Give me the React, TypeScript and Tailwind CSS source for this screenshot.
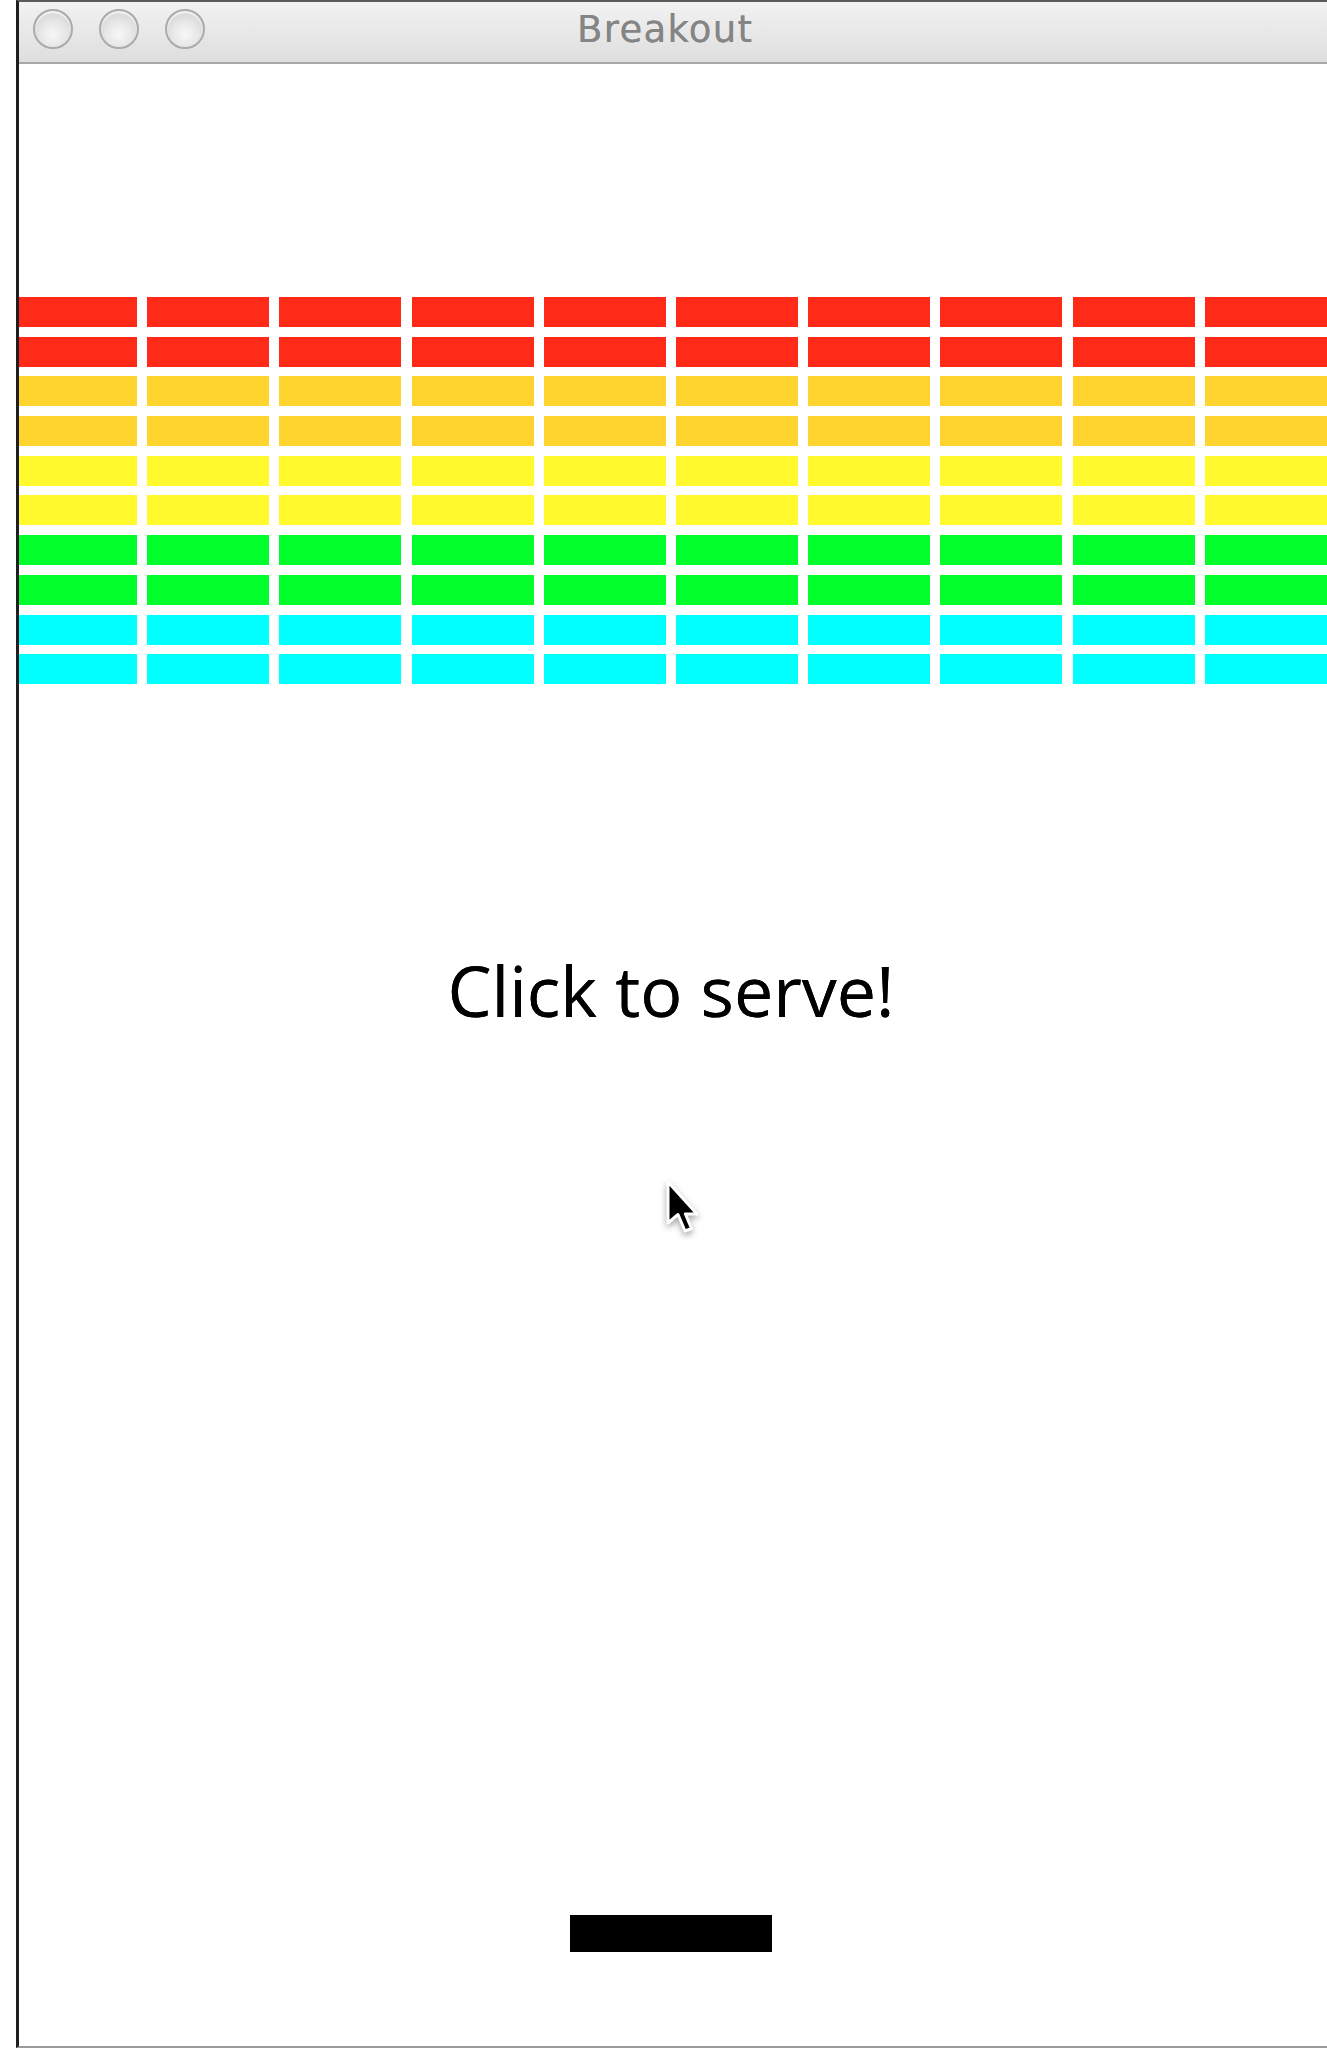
const rows = [
  "bg-[#ff2a17]",
  "bg-[#ff2a17]",
  "bg-[#ffd42e]",
  "bg-[#ffd42e]",
  "bg-[#fff92e]",
  "bg-[#fff92e]",
  "bg-[#00ff2b]",
  "bg-[#00ff2b]",
  "bg-[#00ffff]",
  "bg-[#00ffff]",
];

const COLS = 10;

export default function App() {
  return (
    <div className="relative w-[1327px] h-[2048px] bg-white flex overflow-hidden">
      {/* desktop gutter */}
      <div className="w-[16px] shrink-0 bg-white" />

      {/* window */}
      <div className="flex-1 flex flex-col border-l-[3px] border-l-[#1e1e1e] border-t-2 border-t-[#5a5a5a] border-b-2 border-b-[#9a9a9a] overflow-hidden">
        {/* title bar */}
        <div className="h-[62px] shrink-0 flex items-start pt-[7px] pl-[14px] bg-gradient-to-b from-[#f2f2f2] to-[#dedede] border-b-2 border-b-[#a8a8a8]">
          <div className="flex gap-[26px]">
            {[0, 1, 2].map((i) => (
              <div
                key={i}
                className="w-[40px] h-[40px] rounded-full border-2 border-[#ababab] bg-[radial-gradient(circle_at_50%_65%,#f7f7f7_0%,#e6e6e6_45%,#c9c9c9_100%)] shadow-[inset_0_2px_2px_rgba(255,255,255,0.8)]"
              />
            ))}
          </div>
          <span className="ml-[372px] mt-[2px] text-[37px] leading-none tracking-[1.3px] text-[#858585] font-['DejaVu_Sans',sans-serif] [text-shadow:0_0_0.5px_#858585]">
            Breakout
          </span>
        </div>

        {/* play field */}
        <div className="flex-1 flex flex-col bg-white">
          <div className="mt-[233px] -ml-[4px] grid grid-cols-[repeat(10,122px)] gap-x-[10.2px] gap-y-[9.7px]">
            {rows.map((color, r) =>
              Array.from({ length: COLS }).map((_, c) => (
                <div key={`${r}-${c}`} className={`h-[30px] ${color}`} />
              ))
            )}
          </div>

          <div className="mt-[271px] flex justify-center pr-[4px]">
            <span className="text-[70px] leading-none text-black font-['Open_Sans',sans-serif] [text-shadow:0_0_0.6px_#000]">
              Click to serve!
            </span>
          </div>

          <div className="mt-[890px] ml-[551px] w-[202px] h-[37px] bg-black" />
        </div>
      </div>

      {/* mouse pointer */}
      <svg
        className="absolute left-[665px] top-[1179px] drop-shadow-[0_3px_3px_rgba(0,0,0,0.35)]"
        width="44"
        height="62"
        viewBox="0 0 44 62"
      >
        <path
          transform="translate(3 3)"
          d="M0 0 V41 L10 32.5 L17 49 L23.5 46.5 L17.4 32 H29 Z"
          fill="#000"
          stroke="#fff"
          strokeWidth="3"
          strokeLinejoin="round"
        />
      </svg>
    </div>
  );
}
